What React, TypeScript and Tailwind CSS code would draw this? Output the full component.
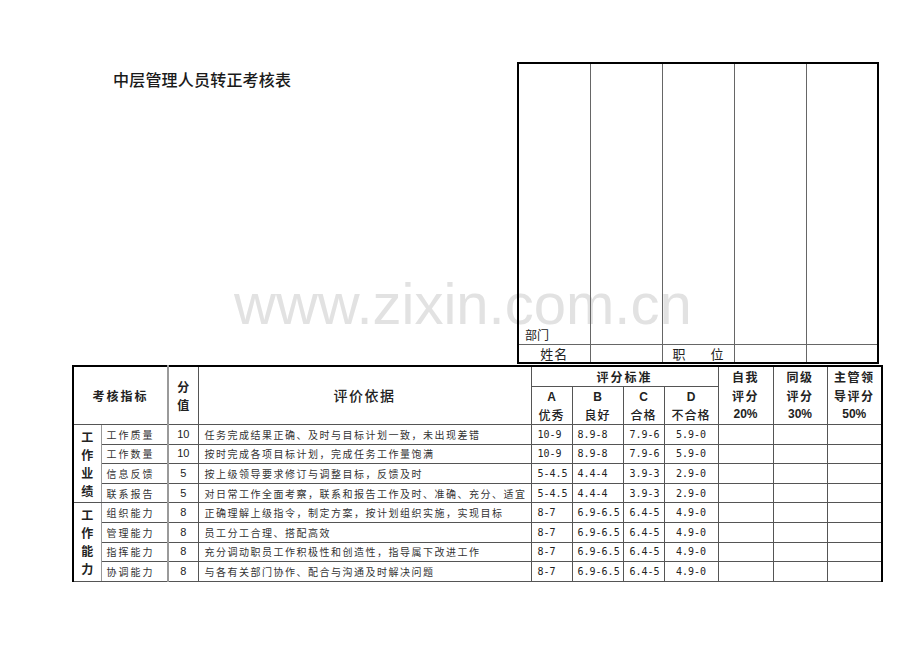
import React from 'react';

// ============================================================================
// 数据
// ============================================================================

type Row = { ind: string; score: string; basis: string; a: string; b: string; c: string; d: string };

const GROUPS: { name: string; rows: Row[] }[] = [
  {
    name: '工作业绩',
    rows: [
      { ind: '工作质量', score: '10', basis: '任务完成结果正确、及时与目标计划一致，未出现差错', a: '10-9', b: '8.9-8', c: '7.9-6', d: '5.9-0' },
      { ind: '工作数量', score: '10', basis: '按时完成各项目标计划，完成任务工作量饱满', a: '10-9', b: '8.9-8', c: '7.9-6', d: '5.9-0' },
      { ind: '信息反馈', score: '5', basis: '按上级领导要求修订与调整目标，反馈及时', a: '5-4.5', b: '4.4-4', c: '3.9-3', d: '2.9-0' },
      { ind: '联系报告', score: '5', basis: '对日常工作全面考察，联系和报告工作及时、准确、充分、适宜', a: '5-4.5', b: '4.4-4', c: '3.9-3', d: '2.9-0' },
    ],
  },
  {
    name: '工作能力',
    rows: [
      { ind: '组织能力', score: '8', basis: '正确理解上级指令，制定方案，按计划组织实施，实现目标', a: '8-7', b: '6.9-6.5', c: '6.4-5', d: '4.9-0' },
      { ind: '管理能力', score: '8', basis: '员工分工合理、搭配高效', a: '8-7', b: '6.9-6.5', c: '6.4-5', d: '4.9-0' },
      { ind: '指挥能力', score: '8', basis: '充分调动职员工作积极性和创造性，指导属下改进工作', a: '8-7', b: '6.9-6.5', c: '6.4-5', d: '4.9-0' },
      { ind: '协调能力', score: '8', basis: '与各有关部门协作、配合与沟通及时解决问题', a: '8-7', b: '6.9-6.5', c: '6.4-5', d: '4.9-0' },
    ],
  },
];

const CJK = "font-['Noto_Sans_CJK_SC',sans-serif]";
const MONO = "font-['DejaVu_Sans_Mono','Noto_Sans_CJK_SC',monospace]";
const SANS = "font-['Liberation_Sans','Noto_Sans_CJK_SC',sans-serif]";
const CELL = 'border border-[#555] p-0';

// ============================================================================
// 主组件
// ============================================================================

const App: React.FC = () => {
  return (
    <div className={`relative w-[920px] h-[651px] overflow-hidden bg-white text-[#222] ${CJK}`}>
      {/* 水印 */}
      <div className={`absolute left-[234px] top-[284px] z-0 text-[58px] leading-[40px] text-[#e2e2e2] ${SANS} select-none pointer-events-none`}>
        www.zixin.com.cn
      </div>

      <div className="relative z-10">
        {/* 标题 + 右上信息框 */}
        <div className="flex pt-[62px]">
          <div className="w-[517px] pl-[113px] pt-[6px]">
            <h1 className="text-[16px] leading-[22px] font-medium tracking-[0.2px] text-[#1a1a1a]">中层管理人员转正考核表</h1>
          </div>
          <table className="w-[362px] table-fixed border-collapse border-2 border-black">
            <tbody>
              <tr className="h-[281px]">
                <td className="border border-[#666] align-bottom pl-[6px] pb-[1px] text-[12px] leading-[16px]">部门</td>
                <td className="border border-[#666]" />
                <td className="border border-[#666]" />
                <td className="border border-[#666]" />
                <td className="border border-[#666]" />
              </tr>
              <tr className="h-[19px]">
                <td className="border border-[#666] text-center text-[13px] leading-[17px] tracking-[1px]">姓名</td>
                <td className="border border-[#666]" />
                <td className="border border-[#666] px-[10px] text-[13px] leading-[17px]">
                  <div className="flex justify-between"><span>职</span><span>位</span></div>
                </td>
                <td className="border border-[#666]" />
                <td className="border border-[#666]" />
              </tr>
            </tbody>
          </table>
        </div>

        {/* 考核表 */}
        <table className="ml-[72px] mt-[1px] w-[809px] table-fixed border-collapse border-2 border-black border-b-[#444] border-b">
          <colgroup>
            <col className="w-[28px]" />
            <col className="w-[67px]" />
            <col className="w-[30px]" />
            <col className="w-[333px]" />
            <col className="w-[41px]" />
            <col className="w-[51px]" />
            <col className="w-[41px]" />
            <col className="w-[54px]" />
            <col className="w-[55px]" />
            <col className="w-[54px]" />
            <col className="w-[55px]" />
          </colgroup>
          <thead>
            <tr className="h-[20px]">
              <th colSpan={2} rowSpan={2} className={`${CELL} text-[12px] font-bold tracking-[2px] text-center`}>考核指标</th>
              <th rowSpan={2} className={`${CELL} border-l-2 border-l-[#9a9a9a] text-[12px] leading-[18px] font-bold text-center`}>
                分<br />值
              </th>
              <th rowSpan={2} className={`${CELL} text-[14px] font-medium tracking-[1.5px] text-center`}>评价依据</th>
              <th colSpan={4} className={`${CELL} text-[12px] font-bold tracking-[2px] text-center leading-[18px]`}>评分标准</th>
              {[
                ['自我', '评分', '20%'],
                ['同级', '评分', '30%'],
                ['主管领', '导评分', '50%'],
              ].map((lines, i) => (
                <th key={i} rowSpan={2} className={`${CELL} text-[12px] font-bold leading-[19px] tracking-[1.5px] text-center`}>
                  <div>{lines[0]}</div>
                  <div>{lines[1]}</div>
                  <div className={`${SANS} tracking-normal`}>{lines[2]}</div>
                </th>
              ))}
            </tr>
            <tr className="h-[37px]">
              {[
                ['A', '优秀'],
                ['B', '良好'],
                ['C', '合格'],
                ['D', '不合格'],
              ].map(([l, t]) => (
                <th key={l} className={`${CELL} text-center text-[12px] font-bold leading-[18px]`}>
                  <div className={`${SANS}`}>{l}</div>
                  <div className="tracking-[1px] font-medium">{t}</div>
                </th>
              ))}
            </tr>
          </thead>
          <tbody>
            {GROUPS.map((g) =>
              g.rows.map((r, i) => (
                <tr key={r.ind} className="h-[19.6px] text-[10px] leading-[17px]">
                  {i === 0 && (
                    <td rowSpan={g.rows.length} className={`${CELL} border-r-[#999]`}>
                      <div className="flex flex-col items-center text-[12px] font-bold leading-[18px]">
                        {g.name.split('').map((ch, k) => (
                          <span key={k}>{ch}</span>
                        ))}
                      </div>
                    </td>
                  )}
                  <td className={`${CELL} pl-[5px] tracking-[2px] text-[#333]`}>{r.ind}</td>
                  <td className={`${CELL} border-l-2 border-l-[#9a9a9a] text-center text-[11px] ${SANS}`}>{r.score}</td>
                  <td className={`${CELL} pl-[6px] tracking-[1.5px] whitespace-nowrap overflow-hidden text-[#333]`}>{r.basis}</td>
                  <td className={`${CELL} pl-[6px] ${MONO}`}>{r.a}</td>
                  <td className={`${CELL} pl-[5px] ${MONO}`}>{r.b}</td>
                  <td className={`${CELL} pl-[6px] ${MONO}`}>{r.c}</td>
                  <td className={`${CELL} text-center ${MONO}`}>{r.d}</td>
                  <td className={CELL} />
                  <td className={CELL} />
                  <td className={CELL} />
                </tr>
              ))
            )}
          </tbody>
        </table>
      </div>
    </div>
  );
};

export default App;
